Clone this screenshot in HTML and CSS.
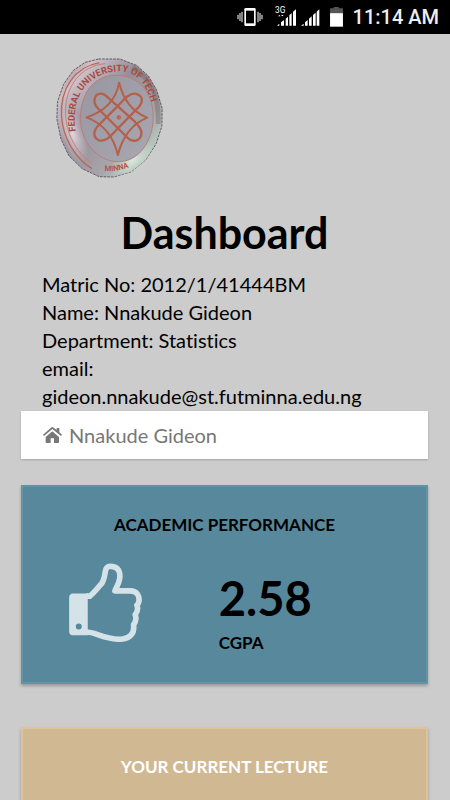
FILE: index.html
```html
<!DOCTYPE html>
<html lang="en">
<head>
<meta charset="utf-8">
<meta name="viewport" content="width=device-width, initial-scale=1">
<title>Dashboard</title>
<link rel="stylesheet" href="styles.css">
</head>
<body>
<header class="status">
  <svg class="vibrate" viewBox="0 0 78 60" aria-hidden="true">
    <rect x="22" y="3" width="34" height="54" rx="4" fill="#fff"/><rect x="27" y="11" width="24" height="38" fill="#000"/>
    <path d="M15 14v32M9 18v24M3 23v14M63 14v32M69 18v24M75 23v14" stroke="#ddd" stroke-width="3.5"/>
  </svg>
  <svg class="signal" viewBox="0 -6 138 66" aria-hidden="true">
    <text class="network" x="0" y="19">3G</text>
    <path d="M9 28l4-4 4 4zM18 24h8l-4 4z" fill="#fff"/>
    <path d="M6 56l7-6v6zM18 56V46l9-7v17zM32 56V35l7-6v27zM43 56V25l7-7v38zM54 56V14l9-7v49zM78 56l8-6v6zM90 56V46l8-7v17zM102 56V35l8-7v28zM114 56V24l8-7v39zM125 56V14l8-7v49z" fill="#fff"/>
  </svg>
  <svg class="battery" viewBox="0 0 40 62" aria-hidden="true">
    <path d="M0 4h12V0h15v4h13v15H0z" fill="#555"/><path d="M0 19h40v42H0z" fill="#fff"/>
  </svg>
  <time class="clock">11:14 AM</time>
</header>
<main class="page">
  <svg class="crest" viewBox="33 38 320 360" role="img" aria-label="Federal University crest">
    <defs>
      <linearGradient id="rim" x1="0" y1="0" x2="1" y2="1">
        <stop offset="0" stop-color="#8e7475"/><stop offset=".18" stop-color="#cfc0ca"/><stop offset=".4" stop-color="#968f99"/><stop offset=".68" stop-color="#a7a3aa"/><stop offset=".86" stop-color="#b9cfc2"/><stop offset="1" stop-color="#5f6b62"/>
      </linearGradient>
      <linearGradient id="face" x1="0" y1="0" x2="1" y2="1">
        <stop offset="0" stop-color="#9896a1"/><stop offset="1" stop-color="#a9a8b1"/>
      </linearGradient>
      <radialGradient id="glow"><stop offset="0" stop-color="#e3d6e0"/><stop offset="1" stop-color="#d6c8d4" stop-opacity="0"/></radialGradient>
      <radialGradient id="sheen"><stop offset="0" stop-color="#dce8df"/><stop offset="1" stop-color="#c6d6ca" stop-opacity="0"/></radialGradient>
      <path id="arc" d="M92 258C77 165 115 93 205 79C280 69 324 125 334 270"/>
      <path id="base" d="M178 377Q216 381 262 362"/>
    </defs>
    <path d="M160 41h64l50 19 35 31 25 42 17 56-1 54-17 52-31 49-44 36-52 15-44-1-51-24-40-39-24-51-12-60 2-50 18-53 30-42 35-24z" fill="url(#rim)" stroke="#625b60" stroke-width="3" stroke-dasharray="8 3"/>
    <ellipse cx="82" cy="265" rx="38" ry="92" transform="rotate(-18 82 265)" fill="url(#glow)"/>
    <ellipse cx="262" cy="345" rx="80" ry="40" transform="rotate(-38 262 345)" fill="url(#sheen)"/>
    <path d="M163 52C87 66 45 130 49 211c4 68 42 129 91 159" fill="none" stroke="#b96757" stroke-width="4"/>
    <path d="M180 55C108 62 61 120 61 200c1 65 31 120 78 153" fill="none" stroke="#c88173" stroke-width="3"/>
    <path d="M262 66c58 35 80 85 77 170" fill="none" stroke="#66574f" stroke-width="15" opacity=".35"/>
    <path d="M211 90c71 0 113 52 113 125s-43 134-105 134S106 288 106 219 142 90 211 90z" fill="url(#face)" stroke="#b58079" stroke-width="3"/>
    <text class="crest-text"><textPath href="#arc">FEDERAL UNIVERSITY OF TECH</textPath></text>
    <text class="crest-base"><textPath href="#base">MINNA</textPath></text>
    <g fill="none" stroke="#b65f49" stroke-width="7" stroke-linejoin="round">
      <path d="M222 112Q207 190 124 216Q199 244 218 329Q240 244 306 217Q241 191 222 112z" stroke-width="6"/>
      <path d="M169 145C145 144 141 173 160 191L251 281C269 292 288 285 289 263C288 247 279 240 269 229L188 156Q178 146 169 145z"/>
      <path d="M270 145C248 144 233 168 216 184L158 242C143 258 144 279 162 285C177 289 192 277 202 266L276 190C296 171 295 150 270 145z"/>
    </g>
    <circle cx="221" cy="216" r="7" fill="#bd6850"/>
  </svg>
  <h1 class="title">Dashboard</h1>
  <div class="details">
    <p>Matric No: 2012/1/41444BM</p>
    <p>Name: Nnakude Gideon</p>
    <p>Department: Statistics</p>
    <p>email: gideon.nnakude@st.futminna.edu.ng</p>
  </div>
  <nav class="crumb" aria-label="Breadcrumb">
    <svg class="home" viewBox="0 0 57 48" aria-hidden="true">
      <path d="M28 13 8 30v16q0 2 2 2h13V34h10v14h13q2 0 2-2V30z"/>
      <path d="M28 0q2 0 4 2l9 7V3h8v13l8 7-3 4L28 6 3 27l-3-4L24 2q2-2 4-2z"/>
    </svg>
    <span>Nnakude Gideon</span>
  </nav>
  <section class="card performance">
    <h2 class="card-title">ACADEMIC PERFORMANCE</h2>
    <div class="score-row">
      <svg class="thumb" viewBox="27 25 219 238" aria-hidden="true">
        <path d="M38 117H83V243H38Q27 242 27 231V129Q27 118 38 117zM56 207a9 9 0 1 0 0 18a9 9 0 1 0 0-18z" fill-rule="evenodd"/>
        <path d="M78 125H89C104 113 115 97 125 87C136 71 134 51 138 43Q143 34 153 35C177 36 182 54 179 73C177 88 169 98 165 109H211C232 109 240 125 237 142Q236 148 231 152Q237 166 226 181Q232 197 221 211C225 239 207 253 188 254C156 258 128 246 105 238Q94 234 80 233" fill="none" stroke="#d5e3e8" stroke-width="17" stroke-linejoin="round"/>
      </svg>
      <div class="score"><strong class="score-value">2.58</strong><span class="score-label">CGPA</span></div>
    </div>
  </section>
  <section class="card lecture">
    <h2 class="card-title">YOUR CURRENT LECTURE</h2>
  </section>
</main>
</body>
</html>
```
FILE: styles.css
```css
* { box-sizing: border-box; }
body {
  margin: 0;
  background: #ccc;
  color: #000;
  font: 20px/28px Lato, sans-serif;
  font-variant-ligatures: none;
}
h1, h2, p { margin: 0; }
.status {
  display: flex;
  align-items: center;
  justify-content: flex-end;
  height: 34px;
  padding-right: 11px;
  background: #000;
  color: #eee;
}
.vibrate { width: 26px; height: 20px; margin-right: 12px; }
.signal { width: 46px; height: 22px; margin: -2px 9px 0 0; }
.network { font: 400 25px Roboto, sans-serif; fill: #fff; }
.battery { width: 13px; height: 20px; margin-right: 10px; }
.clock { font: 500 20px/34px Roboto, sans-serif; }
.page { padding: 24px 22px 0 21px; }
.crest { display: block; width: 107px; height: 120px; margin-left: 35px; }
.crest-text { font: bold 28px Roboto, sans-serif; fill: #a64b3e; }
.crest-base { font: bold 23px Roboto, sans-serif; fill: #b0583f; }
.title {
  margin-top: 31px;
  font-size: 43px;
  line-height: 48px;
  font-weight: 700;
  text-align: center;
}
.details { padding: 13px 21px 1px; }
.crumb {
  display: flex;
  align-items: center;
  gap: 7px;
  min-height: 48px;
  padding: 10px 22px;
  background: #fff;
  color: #777;
  box-shadow: 0 1px 2px rgba(0, 0, 0, .2);
}
.home { width: 19px; height: 16px; fill: #777; }
.card {
  margin-top: 26px;
  padding: 24px 20px;
  border: 2px solid;
  box-shadow: 0 2px 3px rgba(0, 0, 0, .25);
}
.card-title {
  font-size: 17px;
  line-height: 28px;
  font-weight: 700;
  text-align: center;
}
.performance { min-height: 199px; padding-bottom: 16px; background: #57889c; border-color: #6094a6; }
.lecture { min-height: 199px; margin-top: 43px; background: #d0b893; border-color: #dfc296; color: #fff; }
.score-row { display: grid; grid-template-columns: 2fr 3fr; padding: 24px 0 0 26px; column-gap: 25px; }
.thumb { width: 73px; height: 79px; fill: #d5e3e8; }
.score { display: flex; flex-direction: column; padding-top: 10px; }
.score-value { font-size: 47px; line-height: 50px; font-weight: 700; }
.score-label { font-size: 17px; line-height: 28px; padding-top: 6px; font-weight: 700; }
```
